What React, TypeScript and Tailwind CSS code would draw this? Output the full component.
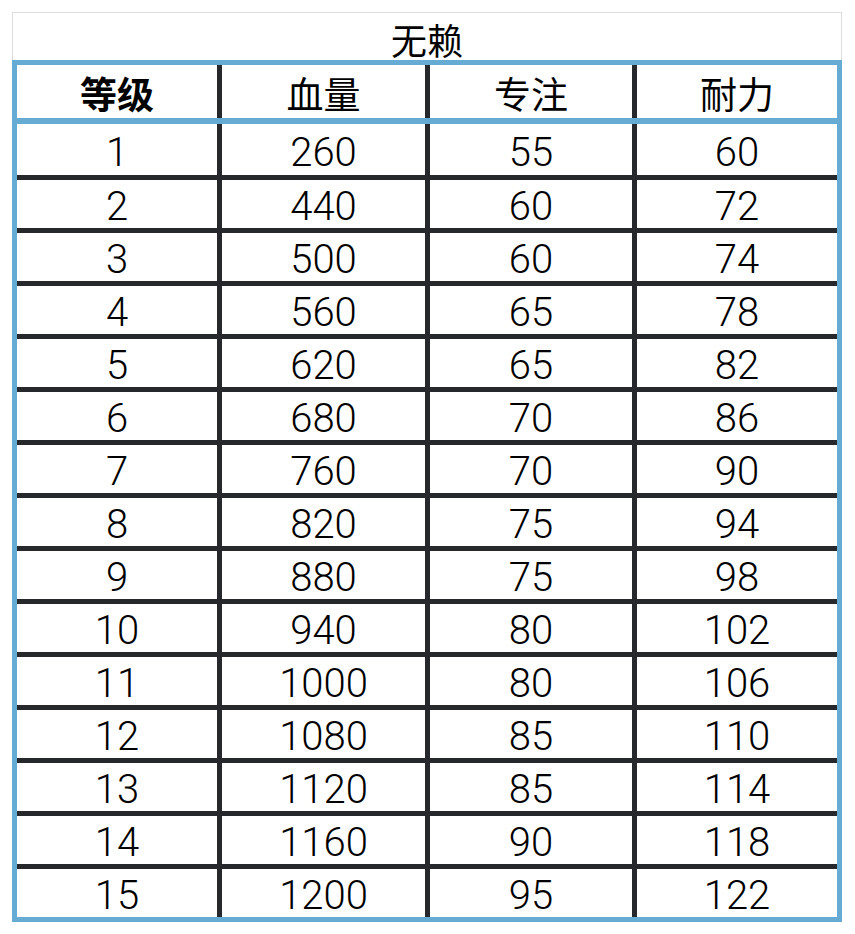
import React from "react";

const rows: [number, number, number, number][] = [
  [1, 260, 55, 60],
  [2, 440, 60, 72],
  [3, 500, 60, 74],
  [4, 560, 65, 78],
  [5, 620, 65, 82],
  [6, 680, 70, 86],
  [7, 760, 70, 90],
  [8, 820, 75, 94],
  [9, 880, 75, 98],
  [10, 940, 80, 102],
  [11, 1000, 80, 106],
  [12, 1080, 85, 110],
  [13, 1120, 85, 114],
  [14, 1160, 90, 118],
  [15, 1200, 95, 122],
];

const cjk = { fontFamily: '"Noto Sans CJK SC", "Noto Sans", sans-serif' };
const num = { fontFamily: 'Roboto, "Noto Sans", sans-serif' };

export default function App() {
  const headers = ["等级", "血量", "专注", "耐力"];
  return (
    <div className="bg-white w-[855px] h-[934px] pt-[12px] pl-[12px]">
      <div className="w-[830px]">
        <div
          className="h-[48px] border border-b-0 border-[#dddddd] flex items-center justify-center text-[36px] leading-none font-normal text-black"
          style={cjk}
        >
          <span className="pt-[4px]">无赖</span>
        </div>
        <div className="border-[5px] border-[#66abd3] bg-[#66abd3]">
          <div className="grid grid-cols-[200px_203px_202px_200px] gap-x-[5px] bg-[#26282c]">
            {headers.map((h, i) => (
              <div
                key={h}
                className={`h-[53px] bg-white flex items-center justify-center text-[37px] leading-none text-black ${i === 0 ? "font-bold" : "font-normal"}`}
                style={cjk}
              >
                <span className="pt-[4px]">{h}</span>
              </div>
            ))}
          </div>
          <div className="h-[6px] bg-[#66abd3]" />
          <div className="grid grid-cols-[200px_203px_202px_200px] gap-x-[5px] gap-y-[5px] bg-[#26282c]">
            {rows.map((r, ri) =>
              r.map((v, ci) => (
                <div
                  key={`${ri}-${ci}`}
                  className={`${ri === 0 ? "h-[51px]" : "h-[48px]"} bg-white flex items-center justify-center text-[40px] leading-none font-light text-black`}
                  style={num}
                >
                  <span className="pt-[6px]">{v}</span>
                </div>
              ))
            )}
          </div>
        </div>
      </div>
    </div>
  );
}
